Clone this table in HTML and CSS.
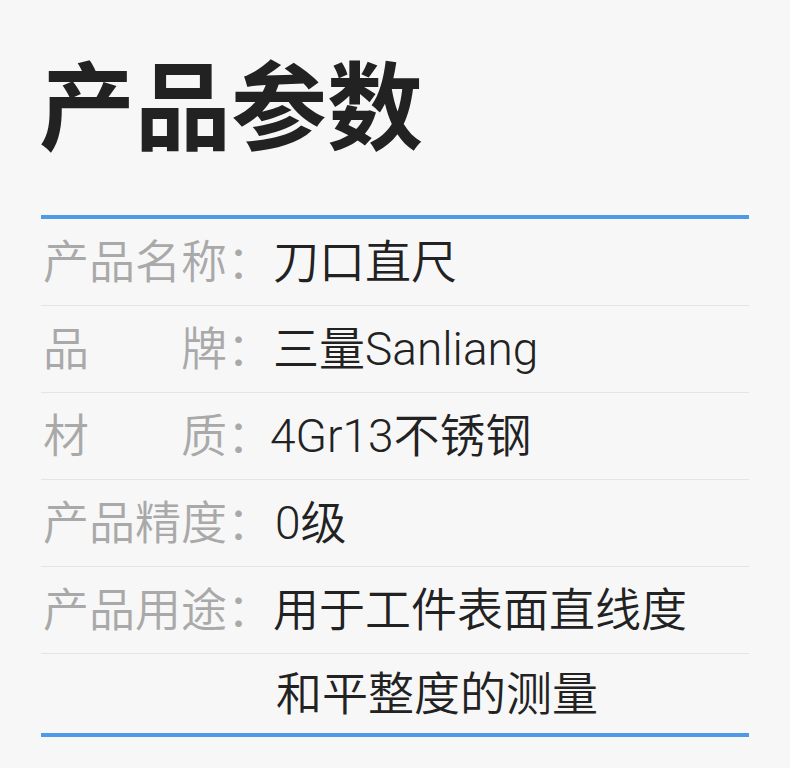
FILE: index.html
```html
<!DOCTYPE html>
<html lang="zh-CN">
<head>
<meta charset="utf-8">
<title>产品参数</title>
<link rel="stylesheet" href="styles.css">
</head>
<body>
<div class="page">
  <h1 class="title">产品参数</h1>
  <div class="table">
    <div class="row"><span class="label">产品名称：</span><span class="value">刀口直尺</span></div>
    <div class="row"><span class="label">品　　牌：</span><span class="value">三量Sanliang</span></div>
    <div class="row"><span class="label">材　　质：</span><span class="value value-mat">4Gr13不锈钢</span></div>
    <div class="row"><span class="label">产品精度：</span><span class="value value-grade">0级</span></div>
    <div class="row"><span class="label">产品用途：</span><span class="value">用于工件表面直线度</span></div>
    <div class="row row-last"><span class="label"></span><span class="value value-cont">和平整度的测量</span></div>
  </div>
</div>
</body>
</html>
```
FILE: styles.css
```css
html, body {
  margin: 0;
  padding: 0;
  background: #f7f7f7;
}
body {
  font-family: Roboto, "Noto Sans CJK SC", sans-serif;
  width: 790px;
  height: 768px;
  overflow: hidden;
}
.page {
  margin-left: 41px;
  width: 708px;
  padding-top: 53px;
}
.title {
  margin: 0;
  font-family: "Noto Sans CJK SC", sans-serif;
  font-size: 96px;
  line-height: 96px;
  font-weight: 700;
  color: #222222;
  margin-left: -2px;
}
.table {
  margin-top: 66px;
  border-top: 4px solid #4d9be6;
  border-bottom: 4px solid #4d9be6;
}
.row {
  display: flex;
  align-items: center;
  height: 86px;
  border-bottom: 1px solid #e4e4e4;
  font-size: 46px;
  line-height: 1;
  font-weight: 350;
  padding-left: 2px;
}
.row-last {
  height: 79px;
  border-bottom: none;
}
.label {
  width: 230px;
  flex: none;
  color: #a9a9a9;
  white-space: pre;
}
.value {
  color: #222222;
}
.value-mat {
  margin-left: -3px;
}
.value-grade {
  padding-left: 2px;
}
.value-cont {
  padding-left: 3px;
}
```
